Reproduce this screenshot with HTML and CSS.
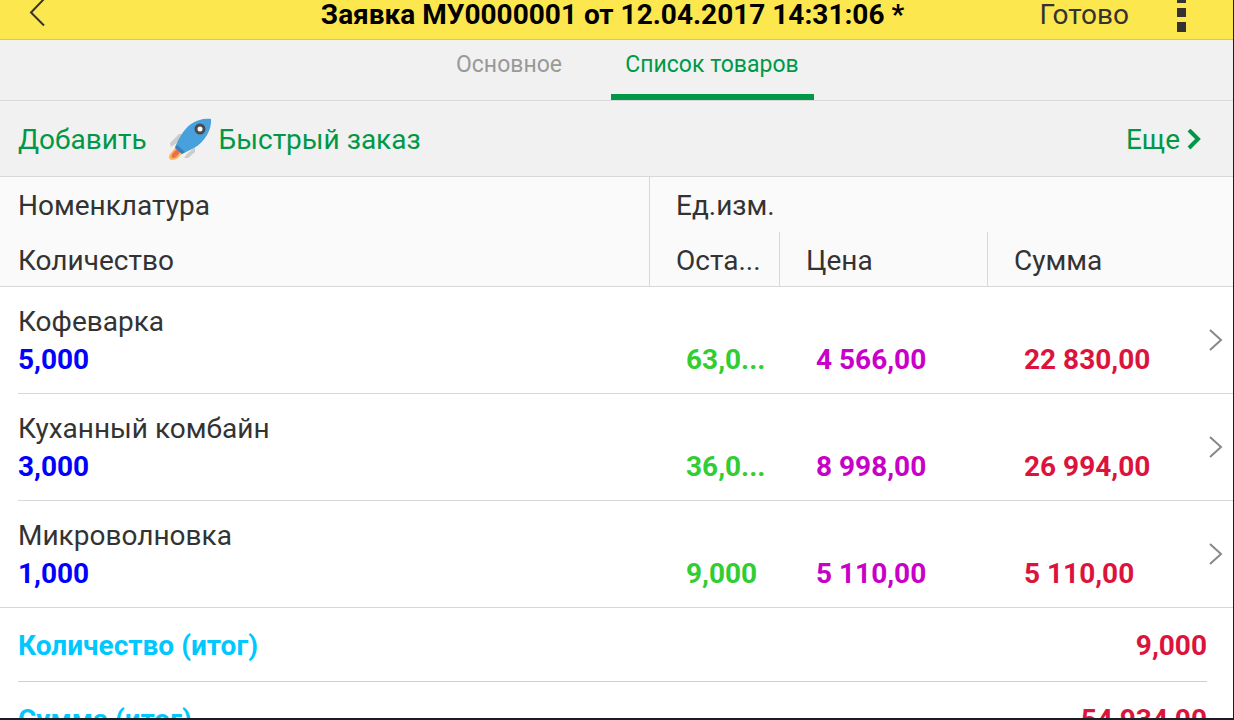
FILE: index.html
```html
<!DOCTYPE html>
<html lang="ru">
<head>
    <meta charset="UTF-8">
    <meta name="viewport" content="width=device-width, initial-scale=1.0">
    <title>Заявка МУ0000001</title>
    <link rel="stylesheet" href="styles.css">
</head>
<body>
    <header class="header">
        <button class="back" type="button" aria-label="Назад">
            <svg width="18" height="30" viewBox="0 0 18 30" fill="none" stroke="#333" stroke-width="2"><path d="M16 -1L3 12.500L16 25.500"/></svg>
        </button>
        <h1 class="title">Заявка МУ0000001 от 12.04.2017 14:31:06 *</h1>
        <div class="header-actions">
            <button class="done" type="button">Готово</button>
            <button class="menu" type="button" aria-label="Меню">
                <svg width="10" height="32" viewBox="0 0 10 32" fill="#333"><path d="M0 0h9v3H0zM0 8h9v9H0zM0 22h9v10H0z"/></svg>
            </button>
        </div>
    </header>

    <nav class="tabs">
        <a class="tab" href="#main">Основное</a>
        <a class="tab active" href="#goods">Список товаров</a>
    </nav>

    <div class="toolbar">
        <button class="tool" type="button">Добавить</button>
        <button class="tool quick" type="button">
            <svg width="44" height="44" viewBox="0 0 44 44">
                <path d="M2 25L11 16L15 16L10 24L3 29zM16 40L19 36L27 29V34L20 40z" fill="#ccc"/>
                <path d="M8 29L2 36C0 39 1 42 4 42C9 42 12 38 14 35z" fill="#fdb94d"/>
                <path d="M9 31L5 35C3 37 3 40 5 40C8 40 10 37 12 34z" fill="#ed6b5b"/>
                <path d="M43 1C44 11 37 24 26 30L14 36L7 29C11 20 16 11 23 6C29 2 36 0 43 1z" fill="#48a0dc"/>
                <path d="M9 27L17 34L14 36L7 30z" fill="#3a7fb0"/>
                <circle cx="32" cy="11" r="4" fill="#fff" stroke="#4b4b4d" stroke-width="3"/>
            </svg>
            Быстрый заказ
        </button>
        <button class="tool more" type="button">
            Еще
            <svg width="14" height="22" viewBox="0 0 14 22" fill="none" stroke="#009846" stroke-width="4"><path d="M2 1L11 10L2 19"/></svg>
        </button>
    </div>

    <main>
        <table class="goods">
            <colgroup>
                <col class="col-name">
                <col class="col-rest">
                <col class="col-price">
                <col>
                <col class="col-open">
            </colgroup>
            <thead>
                <tr>
                    <th>Номенклатура</th>
                    <th class="line" colspan="4">Ед.изм.</th>
                </tr>
                <tr>
                    <th>Количество</th>
                    <th class="line">Оста...</th>
                    <th class="line">Цена</th>
                    <th class="line" colspan="2">Сумма</th>
                </tr>
            </thead>
            <tbody>
                <tr class="name">
                    <td colspan="4">Кофеварка</td>
                    <td class="open" rowspan="2">
                        <button type="button" aria-label="Открыть"><svg width="14" height="22" viewBox="0 0 14 22" fill="none" stroke="#888" stroke-width="2"><path d="M1 1L12 11L1 21"/></svg></button>
                    </td>
                </tr>
                <tr class="values">
                    <td class="count">5,000</td>
                    <td class="rest">63,0...</td>
                    <td class="price">4 566,00</td>
                    <td class="sum">22 830,00</td>
                </tr>
            </tbody>
            <tbody>
                <tr class="name">
                    <td colspan="4">Куханный комбайн</td>
                    <td class="open" rowspan="2">
                        <button type="button" aria-label="Открыть"><svg width="14" height="22" viewBox="0 0 14 22" fill="none" stroke="#888" stroke-width="2"><path d="M1 1L12 11L1 21"/></svg></button>
                    </td>
                </tr>
                <tr class="values">
                    <td class="count">3,000</td>
                    <td class="rest">36,0...</td>
                    <td class="price">8 998,00</td>
                    <td class="sum">26 994,00</td>
                </tr>
            </tbody>
            <tbody>
                <tr class="name">
                    <td colspan="4">Микроволновка</td>
                    <td class="open" rowspan="2">
                        <button type="button" aria-label="Открыть"><svg width="14" height="22" viewBox="0 0 14 22" fill="none" stroke="#888" stroke-width="2"><path d="M1 1L12 11L1 21"/></svg></button>
                    </td>
                </tr>
                <tr class="values">
                    <td class="count">1,000</td>
                    <td class="rest">9,000</td>
                    <td class="price">5 110,00</td>
                    <td class="sum">5 110,00</td>
                </tr>
            </tbody>
        </table>

        <dl class="totals">
            <div class="total">
                <dt>Количество (итог)</dt>
                <dd>9,000</dd>
            </div>
            <div class="total">
                <dt>Сумма (итог)</dt>
                <dd>54 934,00</dd>
            </div>
        </dl>
    </main>
</body>
</html>
```
FILE: styles.css
```css
* {
    box-sizing: border-box;
}

body {
    margin: 0;
    height: 100vh;
    overflow: hidden;
    border-right: 1px solid #1c1c24;
    border-bottom: 2px solid #1c1c24;
    background: #fff;
    color: #333;
    font-family: Roboto, sans-serif;
    font-size: 28px;
}

button {
    padding: 0;
    border: none;
    background: none;
    color: inherit;
    font: inherit;
    cursor: pointer;
}

svg {
    display: block;
}

/* Header */
.header {
    display: grid;
    grid-template-columns: 1fr auto 1fr;
    height: 40px;
    padding: 0 36px 0 28px;
    border-bottom: 1px solid #dcc84a;
    background: #fde74f;
    line-height: 30px;
}

.back {
    justify-self: start;
    align-self: start;
}

.title {
    margin: 0;
    color: #000;
    font-size: 28px;
    font-weight: bold;
}

.header-actions {
    display: flex;
    justify-content: flex-end;
    align-items: flex-start;
    gap: 48px;
}

.menu {
    width: 20px;
}

/* Tabs */
.tabs {
    display: grid;
    grid-template-columns: repeat(2, 203px);
    justify-content: center;
    height: 61px;
    padding-right: 12px;
    border-bottom: 1px solid #d8d8d8;
    background: #f1f1f1;
}

.tab {
    padding-top: 10px;
    border-bottom: 6px solid transparent;
    color: #999;
    font-size: 23px;
    line-height: 30px;
    text-align: center;
    text-decoration: none;
    white-space: nowrap;
}

.tab.active {
    border-color: #009846;
    color: #009846;
}

/* Toolbar */
.toolbar {
    display: flex;
    align-items: center;
    gap: 21px;
    height: 76px;
    padding: 2px 32px 0 18px;
    border-bottom: 1px solid #d8d8d8;
    background: #f1f1f1;
    color: #009846;
}

.tool {
    display: flex;
    align-items: center;
    gap: 7px;
}

.more {
    margin-left: auto;
}

/* Goods table */
.goods {
    width: 100%;
    table-layout: fixed;
    border-collapse: separate;
    border-spacing: 0;
}

.col-name {
    width: 649px;
}

.col-rest {
    width: 130px;
}

.col-price {
    width: 208px;
}

.col-open {
    width: 40px;
}

.goods th {
    height: 55px;
    padding: 2px 0 0 26px;
    background: #fafafa;
    font-weight: normal;
    text-align: left;
    white-space: nowrap;
}

.goods th:first-child,
.goods td:first-child {
    padding-left: 18px;
}

.goods .line {
    border-left: 1px solid #d8d8d8;
}

.goods thead tr:last-child th {
    border-bottom: 1px solid #d8d8d8;
}

/* separator starts at the text, the last one takes the full width */
.goods tbody {
    background: linear-gradient(#d8d8d8, #d8d8d8) 18px 100% / 100% 1px no-repeat;
}

.goods tbody:last-child {
    background-position: 0 100%;
}

.goods td {
    padding: 0;
    line-height: 38px;
    white-space: nowrap;
}

.goods .name td {
    padding-top: 16px;
}

.goods .values td {
    padding-bottom: 15px;
    font-weight: bold;
}

.goods .values td + td {
    padding-left: 37px;
}

.goods .name .open {
    padding: 0 0 2px 16px;
    vertical-align: middle;
}

.open button {
    display: block;
}

.count {
    color: #00f;
}

.rest {
    color: #32cd32;
}

.price {
    color: #c800c8;
}

.sum {
    color: #dc143c;
}

/* Totals */
.totals {
    margin: 0;
    padding: 0 26px 0 18px;
    font-weight: bold;
}

.total {
    display: flex;
    justify-content: space-between;
    padding-top: 2px;
    border-bottom: 1px solid #d0d0d0;
    line-height: 71px;
}

.total dt {
    color: #00c8ff;
}

.total dd {
    margin: 0;
    color: #dc143c;
}
```
